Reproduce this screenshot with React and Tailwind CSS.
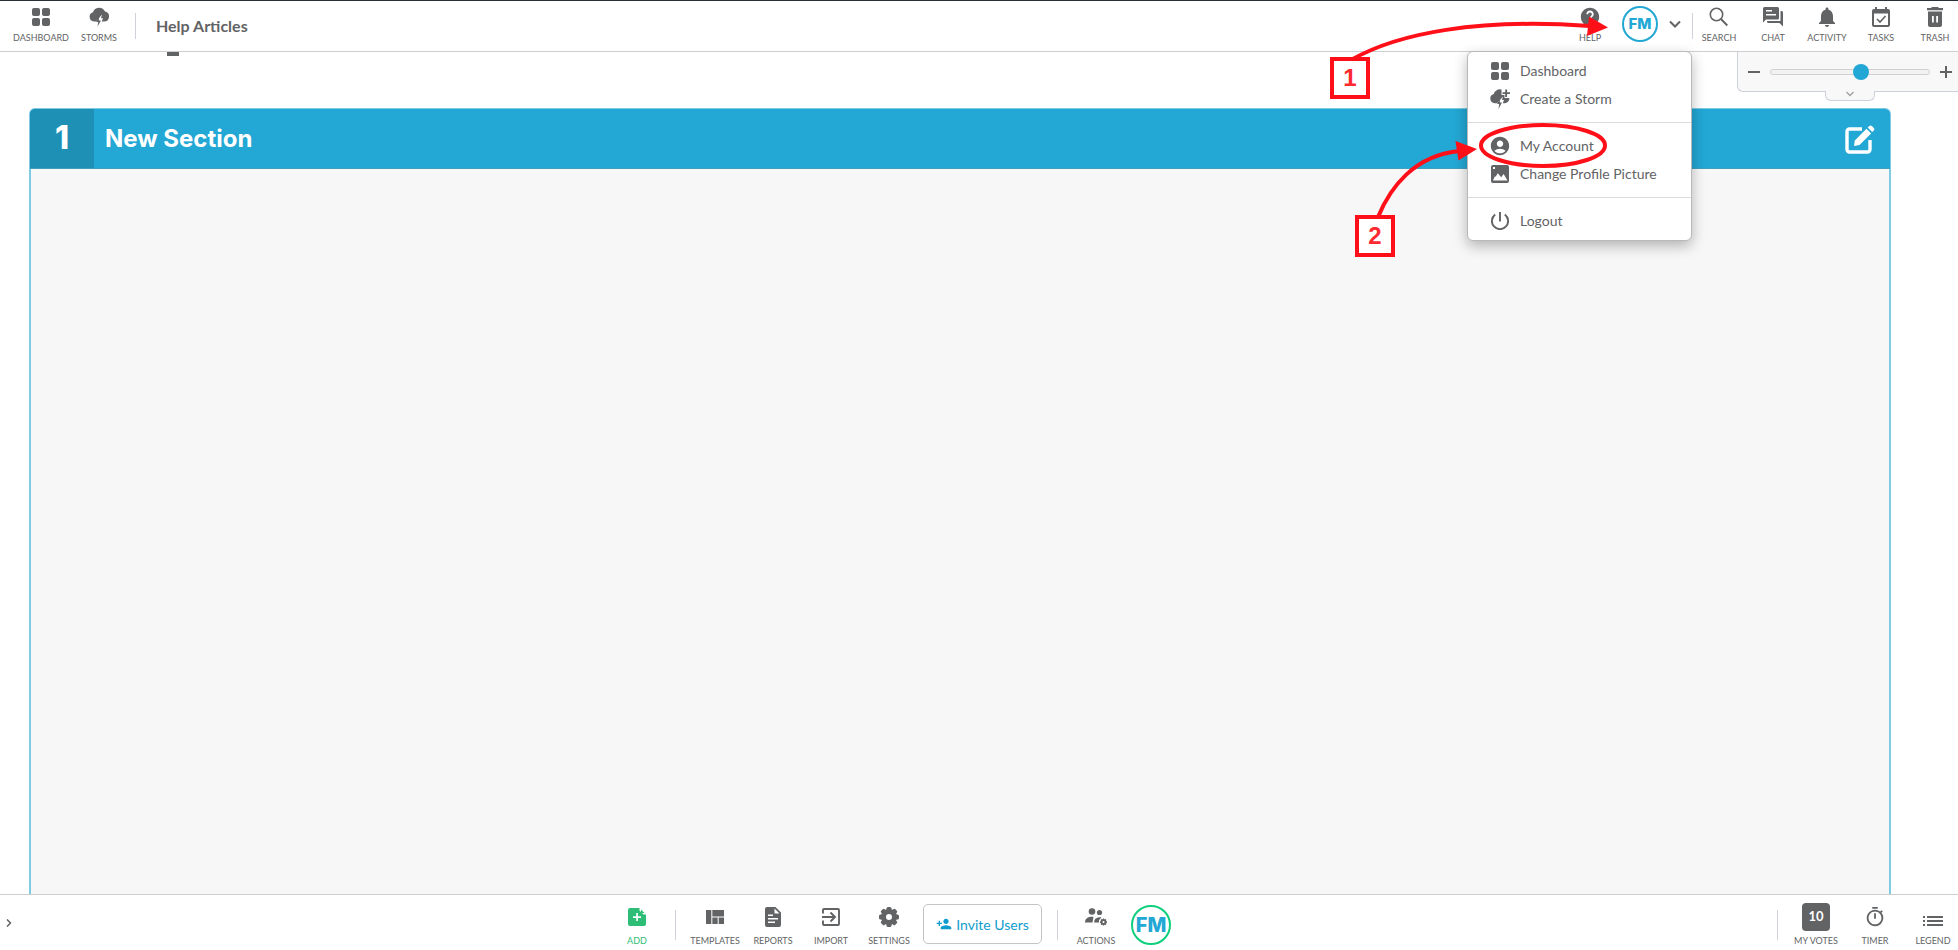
import React from "react";
import { MdViewQuilt, MdHelp, MdAccountCircle, MdNotifications, MdPersonAddAlt1, MdOutlineTimer } from "react-icons/md";

function Svg({ w = 18, h = 18, box, children, className = "" }) {
  return (
    <svg width={w} height={h} viewBox={box || `0 0 ${w} ${h}`} fill="currentColor" className={`shrink-0 ${className}`} aria-hidden="true">
      {children}
    </svg>
  );
}

const GridIcon = () => (
  <Svg>
    <rect width="8" height="8" rx="2" />
    <rect x="10" width="8" height="8" rx="2" />
    <rect y="10" width="8" height="8" rx="2" />
    <rect x="10" y="10" width="8" height="8" rx="2" />
  </Svg>
);

const StormIcon = () => (
  <Svg w={20} h={20}>
    <path d="M5 14.500a4.700 4.700 0 0 1-1-9.200A6.400 6.400 0 0 1 16 4.600a5 5 0 0 1-1 9.900h-2.200l1.200-3.200h-2L13 7.500l-6 7z" />
    <path d="M10.200 9.500 7 15h2.200l-.7 4.500L12 13.600H9.800z" />
  </Svg>
);

const CreateStormIcon = () => (
  <Svg w={20} h={20}>
    <path d="M4.700 14.200A4.700 4.700 0 0 1 3.700 5 6.300 6.300 0 0 1 11.500.6V6h3v3h4.800a4.600 4.600 0 0 1-4.500 5.200h-2l1.200-3.200h-2L13 7.500 7 14.200z" />
    <path d="M10.200 9.500 7 15h2.200l-.7 5L12 13.600H9.800z" />
    <path d="M15.200.5h1.900v2.700H20v1.900h-2.900V8h-1.900V5.100h-2.700V3.200h2.700z" />
  </Svg>
);

const PictureIcon = () => (
  <Svg>
    <path fillRule="evenodd" d="M2 0h14a2 2 0 0 1 2 2v14a2 2 0 0 1-2 2H2a2 2 0 0 1-2-2V2a2 2 0 0 1 2-2zM2 15.500h14.500L12.600 9l-2.400 3.300L6.800 8.200l-2.200 3.600-.7-.6zM2 2v2h2V2z" />
  </Svg>
);

const PowerIcon = () => (
  <Svg>
    <path d="M9 0v9.500M4.200 2.500a8.100 8.100 0 1 0 9.600 0" fill="none" stroke="currentColor" strokeWidth="1.900" />
  </Svg>
);

const SearchIcon = () => (
  <Svg w={20} h={20}>
    <circle cx="7.500" cy="7.500" r="6.200" fill="none" stroke="currentColor" strokeWidth="1.600" />
    <path d="m12 12 6.300 6.500" stroke="currentColor" strokeWidth="1.900" />
  </Svg>
);

const ChatIcon = () => (
  <Svg w={20} h={20}>
    <path fillRule="evenodd" d="M1.500 0h13A1.500 1.500 0 0 1 16 1.500V11a1.500 1.500 0 0 1-1.500 1.500H3L0 15.500V1.500A1.500 1.500 0 0 1 1.500 0zM3 3v1.500h6V3zm0 4v1.500h10V7z" />
    <path d="M17.500 4H18.500A1.500 1.500 0 0 1 20 5.500V19.500L16.500 16H5.500A1.500 1.500 0 0 1 4 14.500V14H17.500z" />
  </Svg>
);

const TasksIcon = () => (
  <Svg w={18} h={20}>
    <path fillRule="evenodd" d="M3 0h2v2h8V0h2v2h1a2 2 0 0 1 2 2v14a2 2 0 0 1-2 2H2a2 2 0 0 1-2-2V4a2 2 0 0 1 2-2h1zM2 6.500V18h14V6.500z" />
    <path d="m5 12 3 3 5.500-6" fill="none" stroke="currentColor" strokeWidth="1.600" />
  </Svg>
);

const TrashIcon = () => (
  <Svg w={16} h={20}>
    <path d="M5 0h6l1 1h4v2.200H0V1h4z" />
    <path fillRule="evenodd" d="M1 4.500h14V18a2 2 0 0 1-2 2H3a2 2 0 0 1-2-2zM5 9v6.500h1.800V9zm4.200 0v6.500H11V9z" />
  </Svg>
);

const AddIcon = () => (
  <Svg>
    <path fillRule="evenodd" d="M2 0h9.500v2.500L15.500 6.500H18V16a2 2 0 0 1-2 2H2a2 2 0 0 1-2-2V2a2 2 0 0 1 2-2zM8.200 5v3.200H5v1.700h3.200V13h1.700V9.900H13V8.200H9.900V5z" />
    <path d="M13 1.500V5h3.500z" />
  </Svg>
);

const ReportIcon = () => (
  <Svg w={16} h={20}>
    <path fillRule="evenodd" d="M2 0h8.500L16 5.500V18a2 2 0 0 1-2 2H2a2 2 0 0 1-2-2V2a2 2 0 0 1 2-2zM9.500 1.500v5h5zM3 7.500V9h5V7.500zm0 3.500v1.500h10V11zm0 3.500V16h7v-1.500z" />
  </Svg>
);

const ImportIcon = () => (
  <Svg>
    <path d="M1 5.500V2a1 1 0 0 1 1-1h14a1 1 0 0 1 1 1v14a1 1 0 0 1-1 1H2a1 1 0 0 1-1-1v-3.500M0 9h12M8.500 4.500 13 9l-4.500 4.500" fill="none" stroke="currentColor" strokeWidth="1.900" />
  </Svg>
);

const Gear = () => (
  <>
    {[0, 45, 90, 135].map((a) => (
      <rect key={a} x="7.500" y="0" width="5" height="20" rx="1.500" transform={`rotate(${a} 10 10)`} />
    ))}
    <circle cx="10" cy="10" r="8" />
    <circle cx="10" cy="10" r="3" fill="white" />
  </>
);

const GearIcon = () => (
  <Svg w={20} h={20}><Gear /></Svg>
);

const ActionsIcon = () => (
  <Svg w={22} h={18}>
    <circle cx="7" cy="3.500" r="3.300" />
    <circle cx="14.500" cy="4.500" r="2.600" />
    <path d="M0 14.500c0-4 3-6 8.500-5.700L7.500 14.500z" />
    <path d="M9.200 14.500c0-3.500 1.800-5.200 7.300-5.200l-2.500 3v2.200z" />
    <g transform="translate(15 10.500) scale(.35)"><Gear /></g>
  </Svg>
);

const LegendIcon = () => (
  <Svg w={20} h={12}>
    <path d="M0 1h2v2H0zm4 0h16v2H4zM0 5h2v2H0zm4 0h16v2H4zM0 9h2v2H0zm4 0h16v2H4z" />
  </Svg>
);

const EditIcon = () => (
  <Svg w={30} h={30}>
    <path d="M17 4H4.500A2.500 2.500 0 0 0 2 6.500v18A2.500 2.500 0 0 0 4.500 27h18a2.500 2.500 0 0 0 2.500-2.500V15" fill="none" stroke="currentColor" strokeWidth="3.400" />
    <path d="m9 21 .8-5.500L21.500 3.800l4.600 4.600L14.500 20z" />
    <path d="m22.700 2.600 1.600-1.600a1.800 1.800 0 0 1 2.500 0l2 2a1.800 1.800 0 0 1 0 2.500l-1.600 1.600z" />
  </Svg>
);

const Chevron = ({ w, h, d, sw = 2, className = "" }) => (
  <Svg w={w} h={h} className={className}>
    <path d={d} fill="none" stroke="currentColor" strokeWidth={sw} />
  </Svg>
);

function Tool({ icon, label, className = "w-[46px]" }) {
  return (
    <button type="button" className={`flex shrink-0 flex-col items-center ${className}`}>
      <span className="flex h-5 items-center justify-center">{icon}</span>
      <span className="mt-[5px] text-[9px] leading-3 whitespace-nowrap">{label}</span>
    </button>
  );
}

function BottomTool({ icon, label, className = "w-[58px]" }) {
  return (
    <button type="button" className={`flex shrink-0 flex-col items-center ${className}`}>
      <span className="flex h-7 items-center justify-center">{icon}</span>
      <span className="mt-1 text-[9px] leading-3 whitespace-nowrap">{label}</span>
    </button>
  );
}

function MenuItem({ icon, label }) {
  return (
    <a href="#" role="menuitem" className="flex h-7 items-center gap-[10px] pl-[22px] text-[14px]">
      <span className="flex w-5 justify-center">{icon}</span>
      <span className="pb-[2px]">{label}</span>
    </a>
  );
}

function Header() {
  return (
    <header className="flex h-[52px] shrink-0 border-t border-b border-t-[#26303a] border-b-[#cfcfd2] bg-white">
      <div className="flex items-start pt-[6px] pl-3">
        <Tool icon={<GridIcon />} label="DASHBOARD" className="w-[58px]" />
        <Tool icon={<StormIcon />} label="STORMS" className="w-[58px]" />
      </div>
      <div className="mt-3 ml-[7px] h-[26px] w-px bg-[#cfd2d8]" />
      <h1 className="ml-5 pt-[13px] text-[16px] leading-6 font-bold">Help Articles</h1>
      <div className="ml-auto flex items-start">
        <div className="pt-[6px]"><Tool icon={<MdHelp size={22} />} label="HELP" /></div>
        <button type="button" aria-label="Account menu" className="mt-[5px] ml-[9px] flex items-center">
          <span className="flex size-9 items-center justify-center rounded-full border-2 border-[#23a7d4] font-['Inter',sans-serif] text-[15px] font-extrabold text-[#23a7d4]">FM</span>
          <Chevron w={12} h={8} d="M1 1.500 6 6.500l5-5" className="ml-[11px]" />
        </button>
        <div className="mt-3 ml-[11px] h-[26px] w-px bg-[#cfd2d8]" />
        <div className="ml-[3px] flex gap-2 pt-[6px]">
          <Tool icon={<SearchIcon />} label="SEARCH" />
          <Tool icon={<ChatIcon />} label="CHAT" />
          <Tool icon={<MdNotifications size={24} />} label="ACTIVITY" />
          <Tool icon={<TasksIcon />} label="TASKS" />
          <Tool icon={<TrashIcon />} label="TRASH" />
        </div>
      </div>
    </header>
  );
}

function ZoomPanel() {
  return (
    <div className="absolute top-0 right-0 flex w-[221px] flex-col items-center">
      <div className="flex h-10 w-full items-center rounded-bl-md border-b border-l border-[#cdd1da] bg-[#f8f8f8] pl-[10px]">
        <button type="button" aria-label="Zoom out"><Svg w={12} h={12}><path d="M0 5h12v2H0z" /></Svg></button>
        <input
          type="range"
          aria-label="Zoom"
          min="0"
          max="100"
          defaultValue="58"
          className="mx-[10px] h-4 w-40 appearance-none bg-transparent [&::-webkit-slider-runnable-track]:h-[6px] [&::-webkit-slider-runnable-track]:rounded-full [&::-webkit-slider-runnable-track]:border [&::-webkit-slider-runnable-track]:border-[#d0d0d0] [&::-webkit-slider-runnable-track]:bg-[#f2f2f2] [&::-webkit-slider-thumb]:-mt-[6px] [&::-webkit-slider-thumb]:size-4 [&::-webkit-slider-thumb]:appearance-none [&::-webkit-slider-thumb]:rounded-full [&::-webkit-slider-thumb]:bg-[#23a7d4]"
        />
        <button type="button" aria-label="Zoom in"><Svg w={12} h={12}><path d="M5 0h2v5h5v2H7v5H5V7H0V5h5z" /></Svg></button>
      </div>
      <button type="button" aria-label="Collapse zoom" className="-mt-px ml-1 flex h-[10px] w-[50px] justify-center rounded-b-md border-r border-b border-l border-[#cdd1da] bg-[#f8f8f8] text-[#a0a0a0]">
        <Chevron w={8} h={6} d="M.5 1 4 4.500 7.500 1" sw={1.3} />
      </button>
    </div>
  );
}

function AccountMenu() {
  return (
    <nav role="menu" className="absolute top-[51px] right-[266px] w-[225px] rounded-md border border-[#b9b9bb] bg-white py-[5px] shadow-[0_5px_14px_rgba(0,0,0,0.28)]">
      <MenuItem icon={<GridIcon />} label="Dashboard" />
      <MenuItem icon={<CreateStormIcon />} label="Create a Storm" />
      <hr className="my-[9px] border-[#dcdcdc]" />
      <MenuItem icon={<MdAccountCircle size={22} className="shrink-0" />} label="My Account" />
      <MenuItem icon={<PictureIcon />} label="Change Profile Picture" />
      <hr className="my-[9px] border-[#dcdcdc]" />
      <MenuItem icon={<PowerIcon />} label="Logout" />
    </nav>
  );
}

const stepBox = "absolute flex h-[42px] w-10 items-center justify-center border-4 border-[#ff0f17] bg-white font-['Liberation_Sans',sans-serif] text-[24px] font-bold text-[#ff2a30]";

function Annotations() {
  return (
    <div className="pointer-events-none absolute top-0 right-[258px] h-[270px] w-[380px]">
      <svg width="380" height="270" viewBox="1320 0 380 270" className="absolute inset-0" aria-hidden="true">
        <g fill="none" stroke="#ff0f17" strokeWidth="4">
          <path d="M1351 60C1398 33 1478 18 1590 26" />
          <path d="M1378 217C1390 188 1414 155 1460 151" />
          <ellipse cx="1543" cy="145.500" rx="62" ry="20.500" />
        </g>
        <path d="M1589 16.500 1608 27.500 1587 36zM1455.500 141 1477 149 1458.500 160.500z" fill="#ff0f17" />
      </svg>
      <div className={`${stepBox} top-[57px] left-[10px]`}>1</div>
      <div className={`${stepBox} top-[215px] left-[35px]`}>2</div>
    </div>
  );
}

function Footer() {
  return (
    <footer className="grid h-14 shrink-0 grid-cols-[1fr_auto_1fr] border-t border-[#cfcfd2] bg-white">
      <button type="button" aria-label="Expand panel" className="flex w-[18px] items-center justify-center">
        <Chevron w={6} h={8} d="m1 .5 3.500 3.500L1 7.500" sw={1.500} />
      </button>
      <div className="flex items-start pr-[166px]">
        <div className="flex pt-2">
          <BottomTool icon={<AddIcon />} label="ADD" className="w-8 text-[#2dbd76]" />
          <div className="mt-[7px] ml-[22px] h-[30px] w-px bg-[#cfd2d8]" />
          <div className="ml-[10px] flex">
            <BottomTool icon={<MdViewQuilt size={24} />} label="TEMPLATES" />
            <BottomTool icon={<ReportIcon />} label="REPORTS" />
            <BottomTool icon={<ImportIcon />} label="IMPORT" />
            <BottomTool icon={<GearIcon />} label="SETTINGS" />
          </div>
        </div>
        <button type="button" className="mt-[9px] ml-[5px] flex h-10 w-[119px] items-center justify-center gap-1 rounded-[5px] border border-[#c4c4c6] text-[14px] text-[#109cce]">
          <MdPersonAddAlt1 size={16} className="-scale-x-100" />
          Invite Users
        </button>
        <div className="mt-[15px] ml-[15px] h-[30px] w-px bg-[#cfd2d8]" />
        <div className="ml-[9px] pt-2"><BottomTool icon={<ActionsIcon />} label="ACTIONS" /></div>
        <span className="mt-[10px] ml-[6px] flex size-10 items-center justify-center rounded-full border-2 border-[#0fcf7d] font-['Inter',sans-serif] text-[20px] font-extrabold text-[#23a7d4]">FM</span>
      </div>
      <div className="flex items-start justify-end">
        <div className="mt-[15px] mr-2 h-[30px] w-px bg-[#cfd2d8]" />
        <div className="-mr-[4px] flex pt-2">
          <BottomTool icon={<span className="flex size-7 items-center justify-center rounded bg-[#626365] text-[13px] font-bold text-white">10</span>} label="MY VOTES" className="w-[60px]" />
          <BottomTool icon={<MdOutlineTimer size={22} />} label="TIMER" />
          <BottomTool icon={<span className="pt-2"><LegendIcon /></span>} label="LEGEND" />
        </div>
      </div>
    </footer>
  );
}

export default function App() {
  return (
    <div className="relative flex h-screen flex-col overflow-hidden bg-white font-['Lato',sans-serif] text-[#626365]">
      <Header />
      <main className="relative flex min-h-0 flex-1 flex-col pr-[67px] pl-[29px]">
        <div className="ml-[138px] h-1 w-3 bg-[#626365]" />
        <section className="mt-[52px] flex flex-1 flex-col rounded-t-md border-x-2 border-t border-[#7fcbe3] bg-[#f7f7f7]">
          <div className="-mx-px flex h-[60px] items-stretch rounded-t-[5px] border-b border-[#3e9fbe] bg-[#23a7d4] text-white">
            <div className="flex w-16 items-center justify-center rounded-tl-[5px] bg-[#1e90b6] pb-[2px] font-['Inter',sans-serif] text-[32px] font-extrabold">1</div>
            <h2 className="flex items-center pl-[11px] font-['Inter',sans-serif] text-[24px] font-bold">New Section</h2>
            <button type="button" aria-label="Edit section" className="mt-[2px] mr-[15px] ml-auto"><EditIcon /></button>
          </div>
        </section>
        <ZoomPanel />
      </main>
      <Footer />
      <AccountMenu />
      <Annotations />
    </div>
  );
}
